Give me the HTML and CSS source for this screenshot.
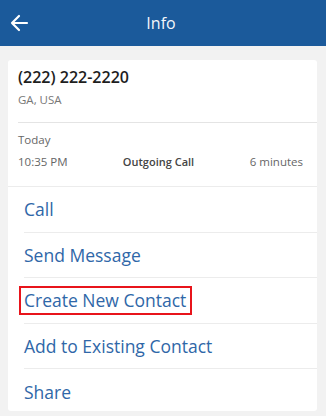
FILE: index.html
```html
<!DOCTYPE html>
<html>
<head>
<meta charset="utf-8">
<link rel="stylesheet" href="styles.css">
</head>
<body>
<div class="screen">
  <header class="topbar">
    <svg class="back" width="20" height="20" viewBox="0 0 20 20"><path d="M18 10H3M10 3L3 10L10 17" fill="none" stroke="#fff" stroke-width="2.2" stroke-linecap="round" stroke-linejoin="round"/></svg>
    <div class="title">Info</div>
  </header>
  <main class="content">
    <section class="card">
      <div class="caller">
        <div class="number">(222) 222-2220</div>
        <div class="location">GA, USA</div>
      </div>
      <div class="callinfo">
        <div class="day">Today</div>
        <div class="callrow">
          <span class="time">10:35 PM</span>
          <span class="type">Outgoing Call</span>
          <span class="dur">6 minutes</span>
        </div>
      </div>
      <ul class="actions">
        <li class="action">Call</li>
        <li class="action">Send Message</li>
        <li class="action"><span class="highlight">Create New Contact</span></li>
        <li class="action">Add to Existing Contact</li>
        <li class="action">Share</li>
      </ul>
    </section>
  </main>
</div>
</body>
</html>
```
FILE: styles.css
```css
* { box-sizing: border-box; }
html, body { margin: 0; padding: 0; }
body {
  width: 326px;
  height: 416px;
  overflow: hidden;
  background: #f2f2f2;
  font-family: "Open Sans", "Noto Sans", sans-serif;
}
.screen { width: 326px; height: 416px; display: flex; flex-direction: column; }
.topbar {
  height: 46px;
  background: #1b5a9b;
  display: flex;
  align-items: center;
  position: relative;
  padding-left: 9px;
}
.back { display: block; }
.title {
  position: absolute;
  left: 0; right: 0; top: 0; bottom: 0;
  display: flex; align-items: center; justify-content: center;
  color: #f4f6fa;
  font-size: 16px;
  font-weight: 500;
  padding-right: 4px;
}
.content { flex: 1; padding: 14px 9px 0 8px; }
.card {
  background: #fff;
  border-radius: 3px;
  height: 351px;
  overflow: hidden;
}
.caller { padding: 6px 0 0 10px; height: 62px; }
.number { font-size: 16px; font-weight: 600; color: #1e1e1e; line-height: 22px; }
.location { font-size: 11.5px; color: #777; line-height: 16px; margin-top: 4px; }
.callinfo {
  margin-left: 10px;
  border-top: 1px solid #e4e4e4;
  padding: 8px 14px 0 0;
  height: 64px;
}
.day { font-size: 11.5px; color: #666; line-height: 17px; }
.callrow {
  display: grid;
  grid-template-columns: 1fr auto 1fr;
  align-items: center;
  margin-top: 6px;
  font-size: 11.5px;
  color: #666;
  line-height: 16px;
}
.type { font-weight: 600; color: #444; font-size: 11px; padding-right: 4px; }
.dur { text-align: right; }
.actions { list-style: none; margin: 0; padding: 0; border-top: 1px solid #ececec; }
.action {
  margin-left: 16px;
  height: 45.5px;
  display: flex;
  align-items: center;
  font-size: 17.5px;
  color: #2f67a8;
  border-bottom: 1px solid #ececec;
}
.action:last-child { border-bottom: none; }
.highlight {
  outline: 2px solid #e8141b;
  outline-offset: 0;
  padding: 0 4px 0 3px;
  margin-left: -3px;
  line-height: 25px;
}
```
